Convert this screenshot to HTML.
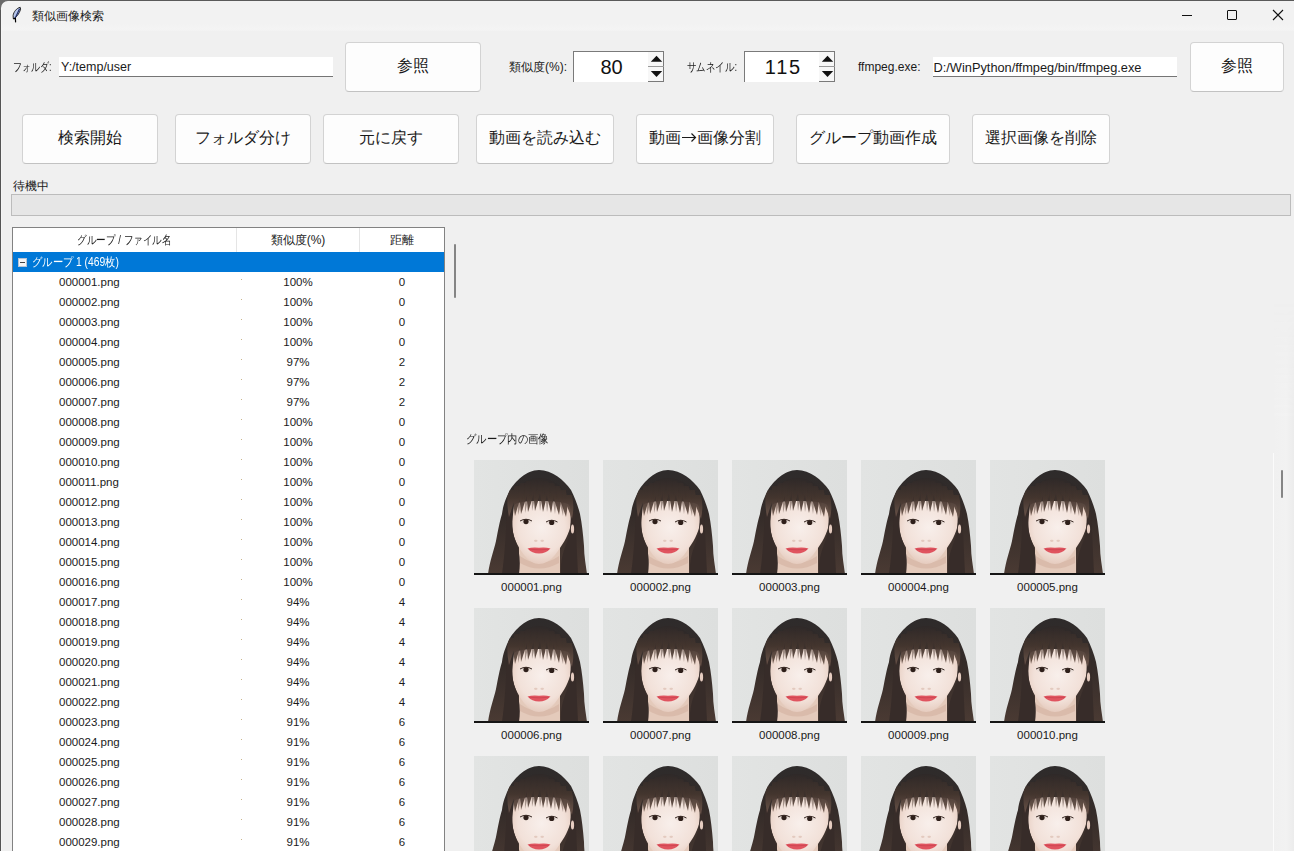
<!DOCTYPE html>
<html><head><meta charset="utf-8">
<style>
html,body{margin:0;padding:0;}
body{width:1294px;height:851px;overflow:hidden;background:#f0f0f0;position:relative;font-family:"Liberation Sans",sans-serif;color:#000;}
.a{position:absolute;white-space:nowrap;}
.t12{font-size:12px;line-height:14px;}
.btn{position:absolute;box-sizing:border-box;background:#fdfdfd;border:1px solid #d3d3d3;border-bottom-color:#c2c2c2;border-radius:4px;font-size:16px;line-height:18px;text-align:center;color:#1a1a1a;}
.btn span{position:absolute;left:0;right:0;top:50%;margin-top:-10px;white-space:nowrap;}
.ent{position:absolute;box-sizing:border-box;background:#fff;border-bottom:1px solid #757575;height:20px;font-size:12.5px;line-height:21px;color:#1a1a1a;padding-left:2px;white-space:nowrap;overflow:hidden;}
.spin{position:absolute;box-sizing:border-box;background:#fff;border-top:1px solid #7a7a7a;border-left:1px solid #7a7a7a;border-right:1px solid #7a7a7a;height:31px;}
.spin .v{position:absolute;left:0;width:75px;top:4px;text-align:center;font-size:20px;line-height:22px;color:#111;}
.spin .sb{position:absolute;left:74px;top:0;width:15px;height:30px;background:#f7f7f7;}
.row{position:absolute;left:0;width:432px;height:20px;font-size:11.5px;line-height:20px;color:#1a1a1a;}
.row .fn{position:absolute;left:46px;}
.row .sim{position:absolute;left:223px;width:124px;text-align:center;}
.row .dst{position:absolute;left:347px;width:84px;text-align:center;}
.row .dot{position:absolute;left:228px;top:7px;width:1px;height:1px;background:#c9b48a;}
.lbl{position:absolute;width:115px;text-align:center;font-size:11.5px;line-height:14px;color:#1a1a1a;}
</style></head>
<body>
<!-- window frame -->
<div class="a" style="left:0;top:0;width:1294px;height:31px;background:linear-gradient(#f2f2f2 0,#f2f2f2 24px,#f4f4f4 29px,#f2f2f2 31px);"></div>
<div class="a" style="left:0;top:0;width:1294px;height:1px;background:#5a5a5a;"></div>
<div class="a" style="left:0;top:0;width:1px;height:851px;background:#555;"></div><div class="a" style="left:1px;top:8px;width:1px;height:843px;background:#f5f5f5;"></div>
<svg class="a" style="left:0;top:0" width="10" height="10"><path d="M0 0H10V1H8A7 7 0 0 0 1 8V10H0Z" fill="#6a6a6a"/></svg>
<!-- title -->
<svg class="a" style="left:0;top:0" width="30" height="28" viewBox="0 0 30 28">
  <path d="M20.2 7.3C16.8 8 13.6 11.8 13.1 15.5L13.3 18.8C15.8 18 19.2 14 20.6 9.2Z" fill="#b4c4ea" stroke="#151515" stroke-width="0.9"/>
  <path d="M19.6 8.8L15 18.6" stroke="#1c2a66" stroke-width="1.1"/>
  <path d="M13.4 18.6L15.4 18.4L15.6 22.4" stroke="#000" stroke-width="1.2" fill="none"/>
</svg>
<div class="a t12" style="left:32px;top:9px;color:#1a1a1a;">類似画像検索</div>
<div class="a" style="left:1182px;top:15px;width:10px;height:1px;background:#111;"></div>
<div class="a" style="left:1227px;top:10px;width:10px;height:10px;box-sizing:border-box;border:1px solid #111;border-radius:1px;"></div>
<svg class="a" style="left:1272px;top:9px" width="12" height="12" viewBox="0 0 12 12"><path d="M1 1L11 11M11 1L1 11" stroke="#111" stroke-width="1.1"/></svg>

<!-- row 1 -->
<div class="a t12" style="left:13px;top:60px;color:#1a1a1a;transform:scaleX(0.75);transform-origin:0 0;">フォルダ:</div>
<div class="ent" style="left:59px;top:57px;width:274px;">Y:/temp/user</div>
<div class="btn" style="left:345px;top:42px;width:136px;height:50px;"><span>参照</span></div>
<div class="a t12" style="left:509px;top:60px;color:#1a1a1a;">類似度(%):</div>
<div class="spin" style="left:573px;top:51px;width:91px;"><div class="v">80</div><div class="sb"></div>
  <svg class="a" style="left:74px;top:0" width="16" height="31" viewBox="0 0 16 31"><path d="M8.5 3.8L14.2 9.8H2.8Z" fill="#111"/><path d="M0 14.5H16" stroke="#9a9a9a"/><path d="M2.8 19H14.2L8.5 25Z" fill="#111"/><path d="M0 29.5H16" stroke="#7a7a7a"/></svg></div>
<div class="a t12" style="left:687px;top:60px;color:#1a1a1a;transform:scaleX(0.79);transform-origin:0 0;">サムネイル:</div>
<div class="spin" style="left:744px;top:51px;width:91px;"><div class="v" style="letter-spacing:1.8px;text-indent:1.8px;">115</div><div class="sb"></div>
  <svg class="a" style="left:74px;top:0" width="16" height="31" viewBox="0 0 16 31"><path d="M8.5 3.8L14.2 9.8H2.8Z" fill="#111"/><path d="M0 14.5H16" stroke="#9a9a9a"/><path d="M2.8 19H14.2L8.5 25Z" fill="#111"/><path d="M0 29.5H16" stroke="#7a7a7a"/></svg></div>
<div class="a t12" style="left:858px;top:60px;color:#1a1a1a;">ffmpeg.exe:</div>
<div class="ent" style="left:933px;top:57px;width:244px;font-size:12.8px;padding-left:0.5px;">D:/WinPython/ffmpeg/bin/ffmpeg.exe</div>
<div class="btn" style="left:1190px;top:42px;width:94px;height:50px;"><span>参照</span></div>

<!-- row 2 buttons -->
<div class="btn" style="left:22px;top:114px;width:136px;height:50px;"><span>検索開始</span></div>
<div class="btn" style="left:175px;top:114px;width:136px;height:50px;"><span>フォルダ分け</span></div>
<div class="btn" style="left:323px;top:114px;width:136px;height:50px;"><span>元に戻す</span></div>
<div class="btn" style="left:476px;top:114px;width:138px;height:50px;"><span>動画を読み込む</span></div>
<div class="btn" style="left:636px;top:114px;width:138px;height:50px;"><span>動画<svg width="16" height="16" viewBox="0 0 16 16" style="vertical-align:-2px"><path d="M1 8.5H14.5M10.5 4.5L14.5 8.5L10.5 12.5" stroke="#1a1a1a" stroke-width="1.2" fill="none"/></svg>画像分割</span></div>
<div class="btn" style="left:796px;top:114px;width:154px;height:50px;"><span>グループ動画作成</span></div>
<div class="btn" style="left:972px;top:114px;width:138px;height:50px;"><span>選択画像を削除</span></div>

<div class="a t12" style="left:13px;top:179px;color:#1a1a1a;">待機中</div>
<div class="a" style="left:11px;top:194px;width:1280px;height:22px;box-sizing:border-box;background:#e6e6e6;border:1px solid #bcbcbc;"></div>

<!-- TREE -->
<div class="a" style="left:12px;top:227px;width:433px;height:630px;box-sizing:border-box;background:#fff;border:1px solid #828282;overflow:hidden;">
<div class="a" style="left:0;top:0;width:431px;height:24px;background:#fff;"></div>
<div class="a" style="left:223px;top:0;width:1px;height:24px;background:#e5e5e5;"></div>
<div class="a" style="left:346px;top:0;width:1px;height:24px;background:#e5e5e5;"></div>
<div class="a t12" style="left:0;top:5px;width:223px;text-align:center;color:#1a1a1a;transform:scaleX(0.80);">グループ / ファイル名</div>
<div class="a t12" style="left:223px;top:5px;width:124px;text-align:center;color:#1a1a1a;">類似度(%)</div>
<div class="a t12" style="left:347px;top:5px;width:84px;text-align:center;color:#1a1a1a;">距離</div>
<div class="a" style="left:0;top:24px;width:431px;height:20px;background:#0078d7;"></div>
<div class="a" style="left:5px;top:30px;width:9px;height:9px;box-sizing:border-box;background:#f4f4f4;border:1px solid #b8c4d4;"><div class="a" style="left:1px;top:3px;width:5px;height:1px;background:#444;"></div></div>
<div class="a t12" style="left:19px;top:27px;color:#fff;transform:scaleX(0.857);transform-origin:0 0;">グループ 1 (469枚)</div>
<div class="row" style="top:44px;"><span class="fn">000001.png</span><span class="dot"></span><span class="sim">100%</span><span class="dst">0</span></div>
<div class="row" style="top:64px;"><span class="fn">000002.png</span><span class="dot"></span><span class="sim">100%</span><span class="dst">0</span></div>
<div class="row" style="top:84px;"><span class="fn">000003.png</span><span class="dot"></span><span class="sim">100%</span><span class="dst">0</span></div>
<div class="row" style="top:104px;"><span class="fn">000004.png</span><span class="dot"></span><span class="sim">100%</span><span class="dst">0</span></div>
<div class="row" style="top:124px;"><span class="fn">000005.png</span><span class="dot"></span><span class="sim">97%</span><span class="dst">2</span></div>
<div class="row" style="top:144px;"><span class="fn">000006.png</span><span class="dot"></span><span class="sim">97%</span><span class="dst">2</span></div>
<div class="row" style="top:164px;"><span class="fn">000007.png</span><span class="dot"></span><span class="sim">97%</span><span class="dst">2</span></div>
<div class="row" style="top:184px;"><span class="fn">000008.png</span><span class="dot"></span><span class="sim">100%</span><span class="dst">0</span></div>
<div class="row" style="top:204px;"><span class="fn">000009.png</span><span class="dot"></span><span class="sim">100%</span><span class="dst">0</span></div>
<div class="row" style="top:224px;"><span class="fn">000010.png</span><span class="dot"></span><span class="sim">100%</span><span class="dst">0</span></div>
<div class="row" style="top:244px;"><span class="fn">000011.png</span><span class="dot"></span><span class="sim">100%</span><span class="dst">0</span></div>
<div class="row" style="top:264px;"><span class="fn">000012.png</span><span class="dot"></span><span class="sim">100%</span><span class="dst">0</span></div>
<div class="row" style="top:284px;"><span class="fn">000013.png</span><span class="dot"></span><span class="sim">100%</span><span class="dst">0</span></div>
<div class="row" style="top:304px;"><span class="fn">000014.png</span><span class="dot"></span><span class="sim">100%</span><span class="dst">0</span></div>
<div class="row" style="top:324px;"><span class="fn">000015.png</span><span class="dot"></span><span class="sim">100%</span><span class="dst">0</span></div>
<div class="row" style="top:344px;"><span class="fn">000016.png</span><span class="dot"></span><span class="sim">100%</span><span class="dst">0</span></div>
<div class="row" style="top:364px;"><span class="fn">000017.png</span><span class="dot"></span><span class="sim">94%</span><span class="dst">4</span></div>
<div class="row" style="top:384px;"><span class="fn">000018.png</span><span class="dot"></span><span class="sim">94%</span><span class="dst">4</span></div>
<div class="row" style="top:404px;"><span class="fn">000019.png</span><span class="dot"></span><span class="sim">94%</span><span class="dst">4</span></div>
<div class="row" style="top:424px;"><span class="fn">000020.png</span><span class="dot"></span><span class="sim">94%</span><span class="dst">4</span></div>
<div class="row" style="top:444px;"><span class="fn">000021.png</span><span class="dot"></span><span class="sim">94%</span><span class="dst">4</span></div>
<div class="row" style="top:464px;"><span class="fn">000022.png</span><span class="dot"></span><span class="sim">94%</span><span class="dst">4</span></div>
<div class="row" style="top:484px;"><span class="fn">000023.png</span><span class="dot"></span><span class="sim">91%</span><span class="dst">6</span></div>
<div class="row" style="top:504px;"><span class="fn">000024.png</span><span class="dot"></span><span class="sim">91%</span><span class="dst">6</span></div>
<div class="row" style="top:524px;"><span class="fn">000025.png</span><span class="dot"></span><span class="sim">91%</span><span class="dst">6</span></div>
<div class="row" style="top:544px;"><span class="fn">000026.png</span><span class="dot"></span><span class="sim">91%</span><span class="dst">6</span></div>
<div class="row" style="top:564px;"><span class="fn">000027.png</span><span class="dot"></span><span class="sim">91%</span><span class="dst">6</span></div>
<div class="row" style="top:584px;"><span class="fn">000028.png</span><span class="dot"></span><span class="sim">91%</span><span class="dst">6</span></div>
<div class="row" style="top:604px;"><span class="fn">000029.png</span><span class="dot"></span><span class="sim">91%</span><span class="dst">6</span></div>
<div class="row" style="top:624px;"><span class="fn">000030.png</span><span class="dot"></span><span class="sim">91%</span><span class="dst">6</span></div>
</div>
<div class="a" style="left:454px;top:244px;width:2px;height:54px;background:#858585;border-radius:1px;"></div>
<!-- RIGHT -->
<svg class="a" style="left:0;top:0" width="0" height="0"><defs>
<linearGradient id="bg" x1="0" y1="0" x2="1" y2="0"><stop offset="0" stop-color="#e2e4e3"/><stop offset="1" stop-color="#dddfde"/></linearGradient>
<linearGradient id="hairg" x1="0" y1="0" x2="0" y2="1"><stop offset="0" stop-color="#2e2b2b"/><stop offset="0.45" stop-color="#352c29"/><stop offset="1" stop-color="#4a3a33"/></linearGradient>
<linearGradient id="bangg" gradientUnits="userSpaceOnUse" x1="0" y1="18" x2="0" y2="58"><stop offset="0" stop-color="#302a29"/><stop offset="0.5" stop-color="#45362f"/><stop offset="1" stop-color="#6d574d"/></linearGradient>
<radialGradient id="skin" cx="0.5" cy="0.42" r="0.62"><stop offset="0" stop-color="#f8efeb"/><stop offset="0.65" stop-color="#f2e1d9"/><stop offset="1" stop-color="#e3c7b9"/></radialGradient>
<clipPath id="hclip"><path d="M14 114C16 100 20 90 22 81C24 70 26 60 28 54C29 46 31 40 36 30C41 22 52 10 65 10C78 10 90 20 97 30C101 38 104 46 106 54C108 64 109 74 110 86C110 96 112 106 113 114Z"/></clipPath>
<symbol id="face" viewBox="0 0 115 115">
<rect x="0" y="0" width="115" height="115" fill="url(#bg)"/>
<path d="M14 114C16 100 20 90 22 81C24 70 26 60 28 54C29 46 31 40 36 30C41 22 52 10 65 10C78 10 90 20 97 30C101 38 104 46 106 54C108 64 109 74 110 86C110 96 112 106 113 114Z" fill="url(#hairg)"/>
<path d="M45 114V86H86V114Z" fill="#e4cabb"/>
<path d="M46 96Q65 110 85 96V103Q65 114 46 103Z" fill="#d2ae9e" opacity="0.55"/>
<path d="M40 46C39 54 38 62 38.5 68C39 76 42 84 50 95C55 101 60 104 65 104C70 104 76 101 81 95C88 86 94 76 96 68C97 60 97 54 96 46C96 43 84 41 65 41C48 41 40 43 40 46Z" fill="url(#skin)"/>
<path d="M39 50C37 62 38 72 42 82C45 90 47 100 45 114H28C31 95 32 70 33 52Z" fill="#372c29"/>
<path d="M96 50C98 62 97 72 93 82C90 90 86 100 87 114H104C103 95 102 70 101 52Z" fill="#372c29"/>
<path d="M33 56C34 36 46 19 65 18C84 19 97 34 99 57C97 45 90 34 80 30C72 28 58 28 50 30C40 34 35 44 33 56Z" fill="#302a29"/>
<g clip-path="url(#hclip)"><g fill="url(#bangg)" opacity="0.95"><path d="M34.2 30Q32.16 43 35 57Q39.84 43 43.8 30Z"/><path d="M40.2 26Q38.16 40 41 56Q45.84 40 49.8 26Z"/><path d="M46.2 23Q45.16 38 47 54Q52.84 38 55.8 23Z"/><path d="M52.2 21Q52.16 36 54 52Q59.84 36 61.8 21Z"/><path d="M58.2 20Q59.16 34 61 51Q66.84 34 67.8 20Z"/><path d="M64.2 21Q66.16 35 69 52Q73.84 35 73.8 21Z"/><path d="M70.2 23Q73.16 37 77 53Q80.84 37 79.8 23Z"/><path d="M76.2 26Q80.16 40 85 55Q87.84 40 85.8 26Z"/><path d="M82.2 30Q87.16 43 92 57Q94.84 43 91.8 30Z"/><path d="M88.2 35Q93.16 46 98 59Q100.84 46 97.8 35Z"/></g><g fill="url(#bangg)" opacity="0.5"><path d="M45 25Q43.6 40 44 55Q48.4 40 51 25Z"/><path d="M51 22Q50.6 37 51 53Q55.4 37 57 22Z"/><path d="M57 20Q57.6 35 58 51Q62.4 35 63 20Z"/><path d="M63 20Q64.6 35 66 51Q69.4 35 69 20Z"/><path d="M69 22Q71.6 36 73 52Q76.4 36 75 22Z"/><path d="M75 24Q78.6 38 81 54Q83.4 38 81 24Z"/><path d="M81 28Q85.6 41 89 56Q90.4 41 87 28Z"/></g></g>
<ellipse cx="52" cy="61.5" rx="5.6" ry="2.7" fill="#e9ddd7"/>
<ellipse cx="77.7" cy="62.4" rx="5.6" ry="2.7" fill="#e9ddd7"/>
<circle cx="52" cy="61.6" r="2.6" fill="#2e1f1a"/>
<circle cx="77.7" cy="62.5" r="2.6" fill="#2e1f1a"/>
<path d="M46 61Q52 57.5 58 61" stroke="#3a2a25" stroke-width="1" fill="none"/>
<path d="M72 62Q77.7 58.5 83.5 62" stroke="#3a2a25" stroke-width="1" fill="none"/>
<ellipse cx="61.8" cy="80.8" rx="1.8" ry="1.1" fill="#cfa697" opacity="0.45"/>
<ellipse cx="68.2" cy="80.8" rx="1.8" ry="1.1" fill="#cfa697" opacity="0.45"/>
<path d="M53.5 88.5Q59 86.8 65 87.8Q71 86.8 76.5 88.5Q72 93.5 65 93.5Q58 93.5 53.5 88.5Z" fill="#e0545f"/><path d="M55 89.2Q65 90.5 75 89.2" stroke="#c9404d" stroke-width="0.7" fill="none"/>
<ellipse cx="98.5" cy="69" rx="1.6" ry="4.5" fill="#e6cdc1"/>
<rect x="0" y="113" width="115" height="2" fill="#151515"/>
</symbol></defs></svg>
<div class="a t12" style="left:466px;top:431.5px;color:#1a1a1a;transform:scaleX(0.86);transform-origin:0 0;">グループ内の画像</div>
<svg class="a" style="left:474px;top:460px" width="115" height="115"><use href="#face"/></svg>
<div class="lbl" style="left:474px;top:580px;">000001.png</div>
<svg class="a" style="left:603px;top:460px" width="115" height="115"><use href="#face"/></svg>
<div class="lbl" style="left:603px;top:580px;">000002.png</div>
<svg class="a" style="left:732px;top:460px" width="115" height="115"><use href="#face"/></svg>
<div class="lbl" style="left:732px;top:580px;">000003.png</div>
<svg class="a" style="left:861px;top:460px" width="115" height="115"><use href="#face"/></svg>
<div class="lbl" style="left:861px;top:580px;">000004.png</div>
<svg class="a" style="left:990px;top:460px" width="115" height="115"><use href="#face"/></svg>
<div class="lbl" style="left:990px;top:580px;">000005.png</div>
<svg class="a" style="left:474px;top:608px" width="115" height="115"><use href="#face"/></svg>
<div class="lbl" style="left:474px;top:728px;">000006.png</div>
<svg class="a" style="left:603px;top:608px" width="115" height="115"><use href="#face"/></svg>
<div class="lbl" style="left:603px;top:728px;">000007.png</div>
<svg class="a" style="left:732px;top:608px" width="115" height="115"><use href="#face"/></svg>
<div class="lbl" style="left:732px;top:728px;">000008.png</div>
<svg class="a" style="left:861px;top:608px" width="115" height="115"><use href="#face"/></svg>
<div class="lbl" style="left:861px;top:728px;">000009.png</div>
<svg class="a" style="left:990px;top:608px" width="115" height="115"><use href="#face"/></svg>
<div class="lbl" style="left:990px;top:728px;">000010.png</div>
<svg class="a" style="left:474px;top:756px" width="115" height="115"><use href="#face"/></svg>
<div class="lbl" style="left:474px;top:876px;">000011.png</div>
<svg class="a" style="left:603px;top:756px" width="115" height="115"><use href="#face"/></svg>
<div class="lbl" style="left:603px;top:876px;">000012.png</div>
<svg class="a" style="left:732px;top:756px" width="115" height="115"><use href="#face"/></svg>
<div class="lbl" style="left:732px;top:876px;">000013.png</div>
<svg class="a" style="left:861px;top:756px" width="115" height="115"><use href="#face"/></svg>
<div class="lbl" style="left:861px;top:876px;">000014.png</div>
<svg class="a" style="left:990px;top:756px" width="115" height="115"><use href="#face"/></svg>
<div class="lbl" style="left:990px;top:876px;">000015.png</div>
<div class="a" style="left:1274px;top:300px;width:20px;height:551px;background:linear-gradient(90deg,#f0f0f0 0,#f2f2f2 12px,#ececec 20px);-webkit-mask-image:linear-gradient(transparent 0,#000 120px);mask-image:linear-gradient(transparent 0,#000 120px);"></div>
<div class="a" style="left:1273px;top:453px;width:1px;height:398px;background:#fbfbfb;"></div>
<div class="a" style="left:1281px;top:470px;width:2px;height:28px;background:#858585;border-radius:1px;"></div>
</body></html>
